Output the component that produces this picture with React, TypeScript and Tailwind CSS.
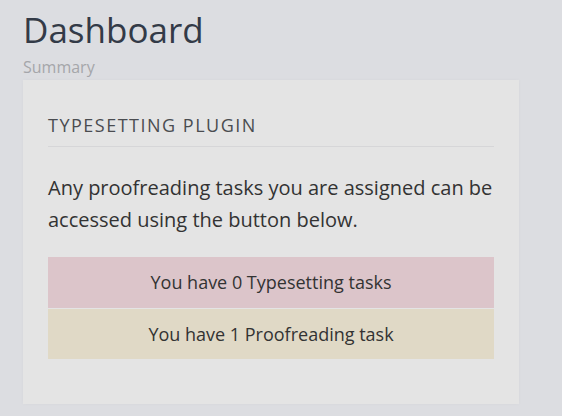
export default function App() {
  return (
    <div className="min-h-screen w-full bg-[#dcdde1] pl-[23px] pt-[6px] font-['Open_Sans',sans-serif]">
      <h1 className="text-[35px] leading-[48px] font-medium text-[#333a47]">Dashboard</h1>
      <p className="text-[16px] leading-[24px] mt-[1px] text-[#a5a6aa]">Summary</p>
      <div className="w-[496px] h-[324px] mt-[1px] bg-[#e4e4e4] px-[25px] pt-[32px] shadow-[0_0_4px_rgba(0,0,0,0.03)]">
        <h2 className="text-[18px] leading-[26px] font-medium tracking-[1.5px] text-[#4a4c50] pb-[8px] border-b border-[#d6d6d8]">
          TYPESETTING PLUGIN
        </h2>
        <p className="text-[20px] leading-[32px] text-[#333] mt-[25px]">
          Any proofreading tasks you are assigned can be accessed using the button below.
        </p>
        <div className="mt-[21px] flex flex-col gap-[1px]">
          <div className="h-[51px] flex items-center justify-center bg-[#dcc5ca] text-[18px] text-[#333]">
            You have 0 Typesetting tasks
          </div>
          <div className="h-[50px] flex items-center justify-center bg-[#e0d9c6] text-[18px] text-[#333]">
            You have 1 Proofreading task
          </div>
        </div>
      </div>
    </div>
  );
}
